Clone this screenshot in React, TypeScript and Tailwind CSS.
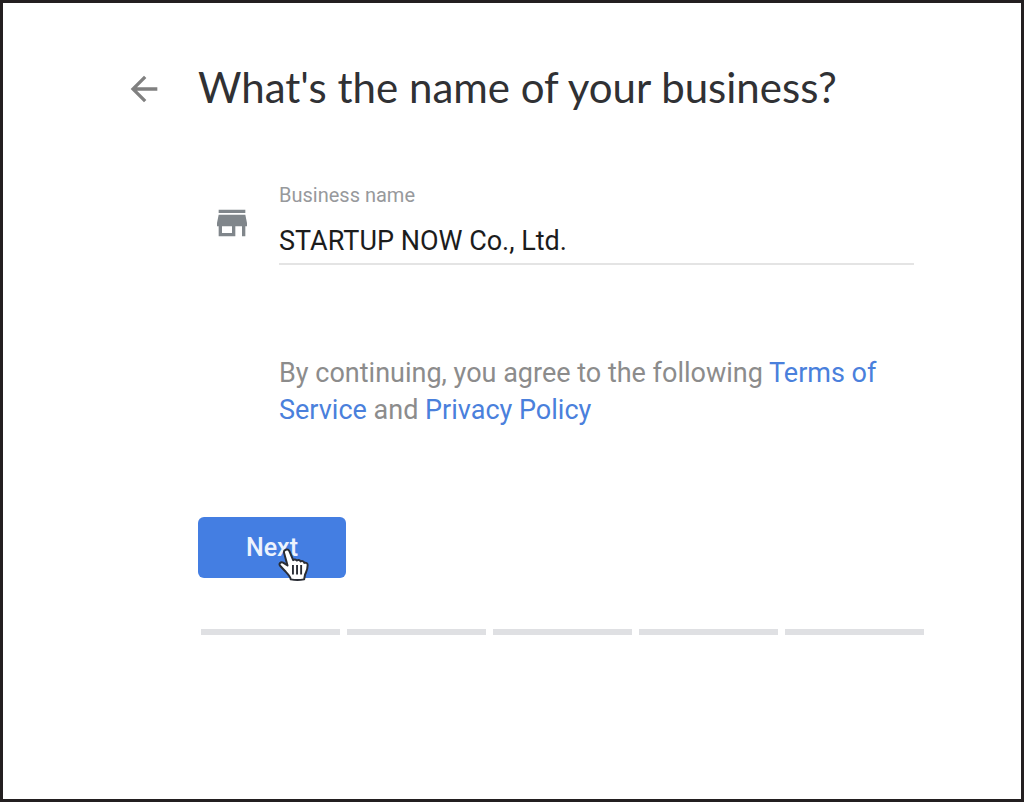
import { useState } from "react";
import { MdArrowBack, MdStore } from "react-icons/md";

const STEPS = [1, 2, 3, 4, 5];

function HandCursor() {
  return (
    <svg
      viewBox="0 0 28 32"
      className="pointer-events-none absolute top-[30px] left-20 h-9 w-[31px]"
      aria-hidden="true"
    >
      <path
        d="M7 2.2c1.3-.6 2.8 0 3.4 1.500l3.300 7.900c.7-.9 2.500-.9 3.300.4.9-.9 2.800-.7 3.400.8 1-.8 2.900-.3 3.400 1.300 1.500-.6 3 .2 3 2 0 4.400-1.400 6.200-2.400 8.700l-.8 4.200c-3.800.8-8.400.8-12 0-.8-3.300-3.200-5.300-5.500-7.800L1.900 16.700c-1.400-1.800.5-3.900 2.700-2.900l4 2.600L5.500 5.200C5 3.700 5.800 2.700 7 2.200z"
        fill="#fff"
        stroke="#2a2d35"
        strokeWidth="1.800"
        strokeLinejoin="round"
      />
      <path d="M13.500 16v8.500M17.200 16v8.500M20.900 16v8.500" stroke="#2a2d35" strokeWidth="1.700" />
    </svg>
  );
}

export default function App() {
  const [name, setName] = useState("STARTUP NOW Co., Ltd.");

  return (
    <div className="min-h-screen border-[3px] border-[#231f20] bg-white pt-14 pr-[97px] pb-16 pl-[121px] font-['Roboto',sans-serif]">
      <header className="flex items-start gap-[34px]">
        <button type="button" aria-label="Back" className="mt-2.5 text-[#808080]">
          <MdArrowBack className="size-10" />
        </button>
        <h1 className="text-[42px] leading-[56px] whitespace-nowrap text-[#303134] font-['Lato',sans-serif]">
          What's the name of your business?
        </h1>
      </header>

      <form className="pl-[74px]" onSubmit={(e) => e.preventDefault()}>
        <div className="mt-[68px] flex pl-3.5">
          <MdStore className="mt-5 size-10 shrink-0 text-[#80868b]" />
          <div className="mr-2.5 ml-[27px] flex-1">
            <label htmlFor="business-name" className="block text-xl leading-6 text-[#97999c]">
              Business name
            </label>
            <input
              id="business-name"
              type="text"
              value={name}
              onChange={(e) => setName(e.target.value)}
              className="mt-2 h-[50px] w-full border-b-2 border-[#e4e4e4] pt-1 text-[27px] text-[#1c1c1c] outline-none"
            />
          </div>
        </div>

        <p className="mt-[90px] pl-[81px] text-[27px] leading-[37px] text-[#8c8c8c]">
          By continuing, you agree to the following{" "}
          <a href="#terms" className="text-[#4a80dc]">Terms of Service</a> and{" "}
          <a href="#privacy" className="text-[#4a80dc]">Privacy Policy</a>
        </p>

        <button
          type="submit"
          className="relative mt-[88px] block h-[61px] w-[148px] rounded-md bg-[#447ee2] text-[25px] font-medium text-[#edf3fd]"
        >
          Next
          <HandCursor />
        </button>
      </form>

      {/* step progress */}
      <div className="mt-[51px] flex gap-[7px] pl-[77px]">
        {STEPS.map((step) => (
          <div key={step} className="h-1.5 flex-1 bg-[#dfe0e3]" />
        ))}
      </div>
    </div>
  );
}
